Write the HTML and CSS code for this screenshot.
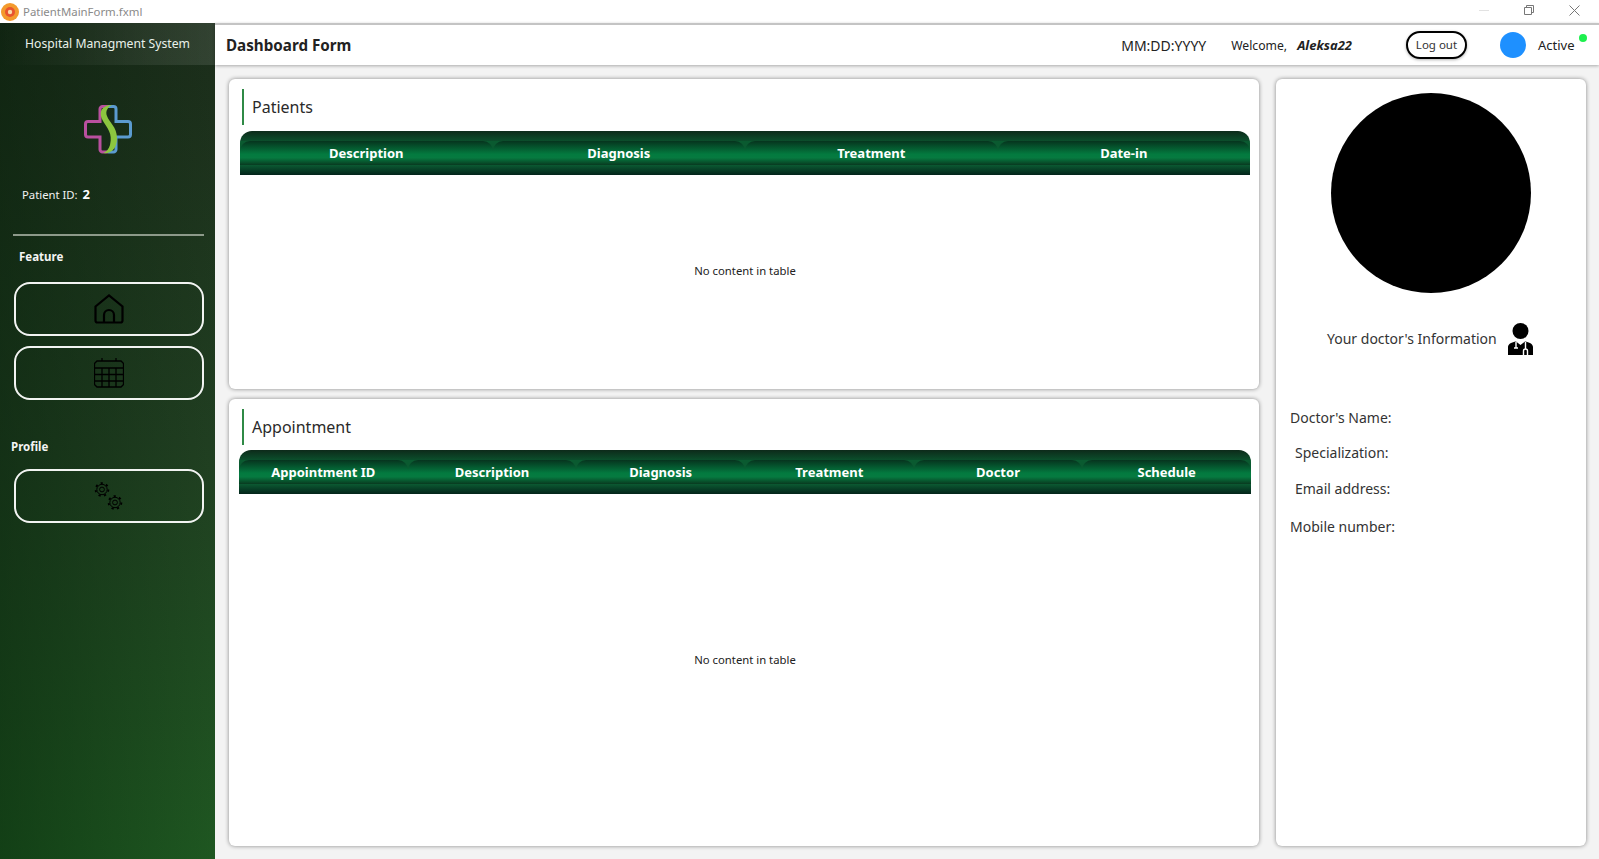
FILE: index.html
```html
<!DOCTYPE html>
<html>
<head>
    <title>PatientMainForm.fxml</title>
    <meta name="viewport" content="width=device-width, initial-scale=1">
    <link rel="stylesheet" href="styles.css">
</head>
<body>
    <div class="titlebar">
        <svg class="app-icon" width="20" height="20" viewBox="0 0 20 20">
            <circle cx="10" cy="10" r="9" fill="#f39a2d"/>
            <circle cx="10" cy="10" r="5" fill="#e8542f"/>
            <circle cx="10" cy="10" r="2.2" fill="#fbd9a8"/>
        </svg>
        <span class="title-text">PatientMainForm.fxml</span>
        <div class="window-controls">
            <svg width="10" height="10" viewBox="0 0 10 10"><path d="M0 5.5H10" stroke="#e2e2e2"/></svg>
            <svg width="10" height="10" viewBox="0 0 10 10" fill="none" stroke="#777"><path d="M.5 2.5H7.5V9.5H.5Z"/><path d="M2.5 2.5V.5H9.5V7.5H7.5"/></svg>
            <svg width="11" height="11" viewBox="0 0 11 11"><path d="M.5 .5L10.5 10.5M10.5 .5L.5 10.5" stroke="#777"/></svg>
        </div>
    </div>

    <div class="app">
        <aside class="sidebar">
            <div class="brand">Hospital Managment System</div>
            <svg class="logo" width="48" height="49" viewBox="0 0 48 49" fill="none">
                <path d="M24 1.5H18.5a2.5 2.5 0 0 0-2.5 2.5V16.5H4a2.5 2.5 0 0 0-2.5 2.5V29.5a2.5 2.5 0 0 0 2.5 2.5H16V44.5a2.5 2.5 0 0 0 2.5 2.5H24" stroke="#b9509f" stroke-width="3"/>
                <path d="M24 1.5H29.5a2.5 2.5 0 0 1 2.5 2.5V16.5H44a2.5 2.5 0 0 1 2.5 2.5V29.5a2.5 2.5 0 0 1-2.5 2.5H32V44.5a2.5 2.5 0 0 1-2.5 2.5H24" stroke="#5b9bd0" stroke-width="3"/>
                <path d="M28 0C17 0 14 8 19 16C23 23 29 28 26 40C25 44 22 47 19 48C27 49 33 44 33 33C33 22 25 17 23 11C21 6 24 2 28 0Z" fill="#8cc63f"/>
            </svg>
            <div class="patient-id">Patient ID: <b>2</b></div>
            <hr class="side-line">
            <div class="side-label feature-label">Feature</div>
            <button class="nav-btn">
                <svg width="30" height="30" viewBox="0 0 30 30" fill="none" stroke="#000" stroke-width="2.2">
                    <path d="M1.5 12.5L15 1.5L28.5 12.5V26.5a2 2 0 0 1-2 2H3.5a2 2 0 0 1-2-2Z"/>
                    <path d="M10 28.5V21a5 5 0 0 1 10 0V28.5"/>
                </svg>
            </button>
            <button class="nav-btn">
                <svg width="30" height="30" viewBox="0 0 30 30" fill="none" stroke="#000" stroke-width="1.3">
                    <path d="M3 3H27L29.5 5.5V26.5L27 29H3L.5 26.5V5.5Z"/>
                    <path d="M8 0V3M22 0V3M.5 10H29.5M.5 16.5H29.5M.5 23H29.5M8 10V29M15 10V29M22 10V29"/>
                </svg>
            </button>
            <div class="side-label profile-label">Profile</div>
            <button class="nav-btn">
                <svg width="30" height="30" viewBox="0 0 30 30" fill="none" stroke="#000" stroke-width="1">
                    <circle cx="8" cy="8.5" r="5.2"/>
                    <circle cx="8" cy="8.5" r="6.4" stroke-width="1.8" stroke-dasharray="2.2 3.4"/>
                    <circle cx="8" cy="8.5" r="2.4"/>
                    <circle cx="21" cy="21.5" r="5.2"/>
                    <circle cx="21" cy="21.5" r="6.4" stroke-width="1.8" stroke-dasharray="2.2 3.4"/>
                    <circle cx="21" cy="21.5" r="2.4"/>
                </svg>
            </button>
        </aside>

        <div class="content">
            <header class="topbar">
                <div class="page-title">Dashboard Form</div>
                <div class="date">MM:DD:YYYY</div>
                <div class="welcome">Welcome,</div>
                <div class="username">Aleksa22</div>
                <button class="logout">Log out</button>
                <div class="avatar"></div>
                <div class="status">Active<span class="status-dot"></span></div>
            </header>

            <main class="workspace">
                <div class="tables">
                    <section class="card patients-card">
                        <h3 class="card-title">Patients</h3>
                        <div class="table-head head-patients">
                            <div class="head-cell">Description</div>
                            <div class="head-cell">Diagnosis</div>
                            <div class="head-cell">Treatment</div>
                            <div class="head-cell">Date-in</div>
                        </div>
                        <div class="table-body">No content in table</div>
                    </section>
                    <section class="card appointment-card">
                        <h3 class="card-title">Appointment</h3>
                        <div class="table-head head-appointment">
                            <div class="head-cell">Appointment ID</div>
                            <div class="head-cell">Description</div>
                            <div class="head-cell">Diagnosis</div>
                            <div class="head-cell">Treatment</div>
                            <div class="head-cell">Doctor</div>
                            <div class="head-cell">Schedule</div>
                        </div>
                        <div class="table-body">No content in table</div>
                    </section>
                </div>

                <section class="card doctor-card">
                    <div class="doctor-photo"></div>
                    <div class="doctor-heading">
                        <span>Your doctor's Information</span>
                        <svg width="25" height="32" viewBox="0 0 25 32">
                            <circle cx="12.5" cy="8" r="8" fill="#000"/>
                            <path d="M0 32V24C0 21 4 19 8 18.5L12.5 22L17 18.5C21 19 25 21 25 24V32Z" fill="#000"/>
                            <path d="M8 19V25M6 25H10M15.5 32V28a2 2 0 0 1 4 0V32M17.5 19V26" fill="none" stroke="#fff" stroke-width="1.4"/>
                        </svg>
                    </div>
                    <div class="doctor-field name-field">Doctor's Name:</div>
                    <div class="doctor-field spec-field">Specialization:</div>
                    <div class="doctor-field email-field">Email address:</div>
                    <div class="doctor-field mobile-field">Mobile number:</div>
                </section>
            </main>
        </div>
    </div>
</body>
</html>
```

FILE: styles.css
```css
* {
    box-sizing: border-box;
}
html, body {
    height: 100%;
}
body {
    margin: 0;
    font-family: "Noto Sans", "Open Sans", sans-serif;
    color: #222;
    background-color: #fff;
    display: flex;
    flex-direction: column;
    overflow: hidden;
}

/* window title bar */
.titlebar {
    height: 23px;
    flex: none;
    display: flex;
    align-items: center;
    background-color: #fff;
}
.app-icon {
    margin-left: 0;
}
.title-text {
    margin-left: 3px;
    font-size: 11.4px;
    color: #8a8a8a;
}
.window-controls {
    margin-left: auto;
    margin-right: 19px;
    margin-bottom: 3px;
    display: flex;
    align-items: center;
    gap: 35px;
}

.app {
    flex: 1;
    display: flex;
    min-height: 0;
}

/* left menu */
.sidebar {
    width: 215px;
    flex: none;
    display: flex;
    flex-direction: column;
    align-items: flex-start;
    background:
        linear-gradient(90deg, rgba(6, 30, 10, 0.45), rgba(40, 60, 40, 0.15)),
        linear-gradient(180deg, #192a18 0%, #1f3f20 50%, #1d5c20 100%);
}
.brand {
    width: 100%;
    height: 42px;
    line-height: 41px;
    text-align: center;
    font-size: 12.2px;
    color: #e9f1ea;
    background: linear-gradient(90deg, rgba(255, 255, 255, 0), rgba(255, 255, 255, 0.1));
}
.logo {
    margin: 40px 0 0 84px;
}
.patient-id {
    margin: 31px 0 0 22px;
    font-size: 11.3px;
    line-height: 18px;
    color: #f2f2f2;
}
.patient-id b {
    margin-left: 2px;
    font-size: 13px;
    color: #fff;
}
.side-line {
    width: 191px;
    height: 2px;
    margin: 30px 0 0 13px;
    border: none;
    background-color: #8d9a8a;
}
.side-label {
    font-size: 11.5px;
    line-height: 16px;
    font-weight: bold;
    color: #f4f4f4;
}
.feature-label {
    margin: 13px 0 0 19px;
}
.profile-label {
    margin: 39px 0 0 11px;
}
.nav-btn {
    width: 190px;
    height: 54px;
    margin-left: 14px;
    padding: 0;
    display: flex;
    align-items: center;
    justify-content: center;
    background: transparent;
    border: 2px solid #f2f4f2;
    border-radius: 16px;
}
.feature-label + .nav-btn {
    margin-top: 17px;
}
.nav-btn + .nav-btn {
    margin-top: 10px;
}
.profile-label + .nav-btn {
    margin-top: 14px;
}

/* top bar */
.content {
    flex: 1;
    min-width: 0;
    display: flex;
    flex-direction: column;
    background-color: #f3f3f3;
}
.topbar {
    height: 42px;
    flex: none;
    display: flex;
    align-items: center;
    padding-left: 11px;
    background-color: #fff;
    border-top: 2px solid #c4c4c4;
    box-shadow: 0 1px 3px rgba(0, 0, 0, 0.3);
    font-size: 13px;
}
.page-title {
    font-size: 15.2px;
    font-weight: bold;
    color: #222;
}
.date {
    margin-left: auto;
    font-size: 14px;
}
.welcome {
    margin-left: 25px;
    font-size: 12.2px;
}
.username {
    margin-left: 10px;
    font-weight: bold;
    font-style: italic;
}
.logout {
    width: 61px;
    height: 28px;
    margin-left: 54px;
    padding: 0 0 2px;
    font-family: inherit;
    font-size: 11.5px;
    color: #333;
    background-color: #fff;
    border: 2px solid #000;
    border-radius: 14px;
    box-shadow: 0 1px 3px rgba(0, 0, 0, 0.3);
}
.avatar {
    width: 26px;
    height: 26px;
    margin-left: 33px;
    border-radius: 50%;
    background-color: #1e90ff;
}
.status {
    position: relative;
    width: 61px;
    margin-left: 12px;
}
.status-dot {
    position: absolute;
    top: -2px;
    right: 12px;
    width: 8px;
    height: 8px;
    border-radius: 50%;
    background-color: #1df04e;
}

/* main area */
.workspace {
    flex: 1;
    min-height: 0;
    display: flex;
    gap: 17px;
    padding: 14px 13px 13px 14px;
}
.tables {
    width: 1030px;
    flex: none;
    display: flex;
    flex-direction: column;
    gap: 10px;
}
.card {
    background-color: #fff;
    border-radius: 6px;
    box-shadow: 0 0 4px rgba(0, 0, 0, 0.45);
}
.patients-card {
    height: 310px;
    display: flex;
    flex-direction: column;
    padding: 10px 9px 24px 11px;
}
.appointment-card {
    flex: 1;
    display: flex;
    flex-direction: column;
    padding: 10px 8px 22px 10px;
}
.card-title {
    height: 36px;
    margin: 0 0 6px 2px;
    padding-left: 8px;
    font-size: 16px;
    font-weight: normal;
    line-height: 36px;
    color: #2a2a2a;
    border-left: 2px solid #2f8a46;
}
.appointment-card .card-title {
    margin-left: 3px;
    margin-bottom: 5px;
}
.table-head {
    height: 44px;
    flex: none;
    display: grid;
    padding: 10px 0;
    border-radius: 12px 12px 0 0;
    background: linear-gradient(180deg, #0d2a1a 0%, #0b4f2c 23%, #0a5a30 23%, #0a5a30 77%, #0b5a32 77%, #03241a 100%);
}
.head-patients {
    grid-template-columns: repeat(4, 1fr);
}
.head-appointment {
    grid-template-columns: repeat(6, 1fr);
}
.head-cell {
    text-align: center;
    font-size: 13px;
    font-weight: bold;
    line-height: 24px;
    color: #fff;
    border-radius: 10px 10px 0 0;
    background: linear-gradient(180deg, #06341e 0%, #037a3f 55%, #067a40 70%, #083a20 100%);
}
.table-body {
    flex: 1;
    display: flex;
    align-items: center;
    justify-content: center;
    font-size: 11.3px;
    color: #222;
}

/* doctor panel */
.doctor-card {
    flex: 1;
    display: flex;
    flex-direction: column;
    align-items: flex-start;
    padding: 14px 0 0 14px;
    font-size: 14px;
    color: #333;
}
.doctor-photo {
    width: 200px;
    height: 200px;
    margin-left: 41px;
    border-radius: 50%;
    background-color: #000;
}
.doctor-heading {
    display: flex;
    align-items: flex-start;
    gap: 11px;
    margin: 30px 0 0 37px;
    line-height: 32px;
}
.doctor-field {
    line-height: 20px;
}
.name-field {
    margin-top: 53px;
}
.spec-field {
    margin: 15px 0 0 5px;
}
.email-field {
    margin: 16px 0 0 5px;
}
.mobile-field {
    margin-top: 18px;
}
```
